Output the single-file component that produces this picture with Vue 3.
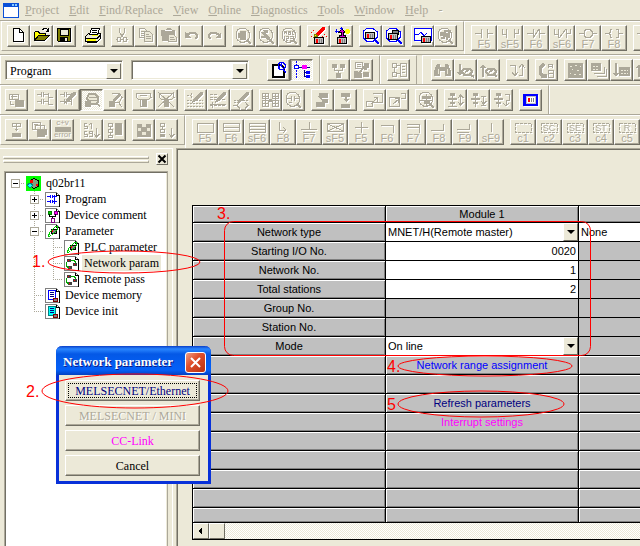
<script setup>
import { ref } from "vue"

const menus = ["Project", "Edit", "Find/Replace", "View", "Online", "Diagnostics", "Tools", "Window", "Help"]

// every part is [path, fill, stroke]; "c" is the current text colour
const lens = ["M14 14l4 4", "none", "c", 2]
const ring = ["M7 2.500h5l3 2 1.500 3v4l-2 3-3 1.500h-4l-3-2-1.500-3v-4l1.500-3z", "none", "c"]
const plc = (x, y) => [
    [`M${x} ${y}h9v6h-9z`, "#c0c0c0", "#000"],
    [`M${x + 1} ${y + 1}h2v4h-2z`, "#f00", "none"],
    [`M${x + 5} ${y + 1}v4M${x + 7} ${y + 1}v4`, "none", "#808080"],
]
const ladder = ["M2 4.500h4m2 0h5M6.500 2v5M8.500 2v5M13.500 3v12M2 11.500h4m2 0h5M6.500 9v5M8.500 9v5", "none", "c"]
const pen = ["M8 9l7-7h3v2l-7 7-4 2z", "c", "none"]

const icons = {
    new: [["M5.500 2.500h6l4 4v9h-10z", "#fff", "#000"], ["M11.500 2.500v4h4", "none", "#000"]],
    open: [
        ["M3.500 14.500v-8l1-1h3l1 2h6v3h-6z", "#ff0", "#000"],
        ["M7.500 9.500h11l-5 5h-10z", "#808000", "#000"],
        ["M11.500 4.500l1-2h3l2 3M17.500 2v3.500h-3", "none", "#000"],
    ],
    save: [
        ["M3.500 2.500h13v13h-12l-1-1z", "#808000", "#000"],
        ["M6 3h8v6h-8z", "#ece9d8", "#000"],
        ["M6 11h8v5h-8z", "#000", "none"],
        ["M11 12h2v3h-2z", "#ece9d8", "none"],
    ],
    print: [
        ["M2.500 10.500l3-3h12v5l-3 3h-12z", "#ece9d8", "#000"],
        ["M6.500 8.500l2-6h8l-2 6z", "#fff", "#000"],
        ["M9 4.500h5M8.500 6.500h5M3 12.500h11l3-3", "none", "#000"],
        ["M4 13h9v2h-9zM9 9h6v1h-6z", "#ff0", "none"],
        ["M4 16.500h10", "none", "#000"],
    ],
    cut: [
        ["M7.500 2v4l3 5M12.500 2v4l-3 5", "none", "c"],
        ["M6 11.500h2l1 2-1 2h-2l-1-2zM12 11.500h2l1 2-1 2h-2l-1-2z", "none", "c"],
    ],
    copy: [
        ["M4.500 2.500h5l2 2v7h-7zM6 5.500h3M6 7.500h3M6 9.500h3", "none", "c"],
        ["M9.500 5.500h5l3 3v7h-8zM11 8.500h3M11 10.500h5M11 12.500h5", "#ece9d8", "c"],
    ],
    paste: [
        ["M3 4h4l2-2h3l2 2h3v11h-13z", "c", "none"],
        ["M10.500 8.500h5l3 3v4h-8zM12 11.500h4M12 13.500h5", "#ece9d8", "c"],
        ["M7 4.500h7", "none", "#fff"],
    ],
    undo: [["M4 6v6h6z", "c", "none"], ["M6 9l3-2h5l2 2v2l-2 2", "none", "c", 2]],
    redo: [["M17 6v6h-6z", "c", "none"], ["M15 9l-3-2h-5l-2 2v2l2 2", "none", "c", 2]],
    findBlock: [ring, lens, ["M7 5h6v9h-6zM5 7h3v5h-3z", "c", "none"]],
    findPen: [ring, lens, ["M5 6h3l6 6v2h-3l-2-2h-4v-2h3z", "c", "none"], ["M7 4h5v3h-3z", "c", "none"]],
    findText: [
        ring, lens,
        ["M5.500 8v-3h2v3m0-1.500h-2M9.500 5v3.500h2v-3.500zm0 1.500h2M15 5.500h-2v3h2M5.500 10v4M7 10.500h2v1.500h-2v2h2M11 10.500h3v3.500h-3m0-2h3", "none", "c"],
    ],
    write: [
        ["M7 8l7-7h3v2l-7 7z", "#f00", "none"],
        ["M6 11l1-3 3 2z", "#ff0", "#808000"],
        ["M3 6h1M5 4h1M16 8h1M18 10h1M14 10h1M3 10h1", "none", "#f00"],
        ...plc(6.5, 11.5),
    ],
    read: [
        ["M8 9h2v-3h-2l3-3 3 3h-2v3h2v2h-6z", "#c0c", "#000"],
        ["M3.500 5h4M5.500 3v4M10.500 1v3M9 2.500h3", "none", "#00f"],
        ["M15 3h3v1h1v3h-1v1h-3v-1h-1v-3h1z", "#ff0", "none"],
        ...plc(6.5, 11.5),
    ],
    monitor: [["M7 2.500h6l4 3v6l-4 4h-6l-4-4v-6z", "#fff", "#00f"], ["M15 14l4 4", "none", "#00f", 2], ...plc(5.5, 6.5)],
    monitorAll: [
        ["M7 2.500h6l4 3v6l-4 4h-6l-4-4v-6z", "#fff", "#00f"], ["M15 14l4 4", "none", "#00f", 2],
        ["M9.500 4.500h6v4h-6z", "#808080", "#000"], ...plc(5.5, 7.5),
    ],
    trace: [["M2.500 2.500h17v12h-17zM2 8.500h4l3-2 3 3 3-2", "#fff", "#00f"], ...plc(9.5, 10.5)],
    findGlobe: [ring, lens, ["M5 7h5v2h-5M8.500 4.500h5v3h-3M6 12h3v-2h5M11.500 8v6M14 9v3", "none", "c", 2]],
    docFind: [
        ["M4.500 4.500h8l3 3v9h-11z", "#fff", "#000", 2],
        ["M12 2.500h3l2 2v3l-2 2h-3l-2-2v-3zM15 9l3 4", "none", "#00f"],
        ["M11 3l4 5M14 3l-3 5", "none", "#00f"],
    ],
    tree: [
        ["M5.500 1v17", "none", "#00f", 1, "2 1"],
        ["M3.500 5.500h4v3h-4z", "#fff", "#00f"],
        ["M8 7.500h3M16 7.500h3M13.500 10v6h2M13 12.500h2", "none", "#000080"],
        ["M11 5h5v4h-5z", "#f0f", "none"],
        ["M15 11h4v3h-4zM15 15h4v3h-4z", "#00f", "none"],
    ],
    hub: [["M4 4h5v4h-5zM12 4h5v4h-5zM8 13h5v5h-5z", "c", "none"], ["M6.500 7v3h8v-3M10.500 10v4", "none", "c"]],
    docSwap: [
        ["M4.500 2.500h7v6h-7zM6 4.500h4M6 6.500h4", "none", "c"],
        ["M13 3h5v5h-2v2h-3zM3 11h4v2h4v5h-8zM12 12h6v5h-6z", "c", "none"],
        ["M8 13l6-7", "none", "c", 2],
    ],
    ladderDoc: [["M4 3.500h4v4h-4zM4 12.500h4v4h-4zM6.500 8v4M9 5.500h3v8h-3M12.500 3.500h6v13h-6zM14 6.500h3M14 9.500h3M14 12.500h3", "none", "c"]],
    binoculars: [["M5 4h3v3h5v-3h3l3 7v5h-6v-5h-5v5h-6v-5z", "c", "none"], ["M6.500 9v5M15.500 9v5", "none", "#ece9d8"]],
    downFind: [["M4 4h2v8h2l-3 4-3-4h2z", "c", "none"], ["M9 8.500h6l2 3-2 3h-6l-2-3zM10 12l4-2M16 15l3 2", "none", "c", 2]],
    upFind: [["M4 17h2v-9h2l-3-4-3 4h2z", "c", "none"], ["M10 8.500h6l2 3-2 3h-6l-2-3zM11 12l4-2M17 15l2 2", "none", "c", 2]],
    jump: [["M3 5.500h5v9M5 12l3 4 3-4M12 15.500h3v-10M12 8l3-4 3 4", "none", "c"]],
    replace: [
        ["M8 4l-4 4v5l4 4", "none", "c", 3], ["M7 14h4v4h-6z", "c", "none"],
        ["M12.500 8v-4h4v4m0-2h-4M12.500 10v7h5v-7zM12 13.500h5", "none", "c"],
    ],
    grid: [["M3 3h15v15h-15z", "c", "none"], ["M5 6h2M10 5h2M15 6h1M7 9h1M12 10h2M5 13h1M9 14h2M14 14h2", "none", "#ece9d8", 1]],
    layers: [["M3 3h10v8h-10z", "c", "none"], ["M5 6h6M5 9h6", "none", "#ece9d8", 1, "2 1"], ["M6 13.500h10v-7M9 16.500h9v-8", "none", "c", 1]],
    downGrid: [["M4 3h2v10h2l-3 4-3-4h2zM8 7h11v9h-11z", "c", "none"], ["M10 10h7M10 13h7", "none", "#ece9d8", 1, "2 1"]],
    windows: [["M3.500 4.500h9v5h-9zM5 6.500h6M6.500 4v5", "none", "c"], ["M9 10h9v7h-9z", "c", "none"], ["M4 11v3l4 1", "none", "c"]],
    rungs: [ladder, ["M14 7.500h4M14 14.500h4", "none", "c"]],
    rungsPen: [ladder, pen],
    hand: [["M6 8l2-4h6l3 3v5l-2 2h-7z", "#ece9d8", "c", 2], ["M8 7.500h8M8 10.500h8M16 13l3 4", "none", "c"], ["M4 11h6v6h-6z", "c", "none"]],
    penFind: [["M8 3.500h7l3 4-3 5h-5M14 12l4 5", "none", "c"], ["M5 11h6v6h-6zM8 10l7-7 2 2-7 7z", "c", "none"]],
    plug: [["M3 3.500h14l1 4-3 2h-9l-3-2zM7 5.500h7M7.500 10v6h6v-6", "none", "c"], ["M9 10h5v7h-5z", "c", "none"]],
    plugOff: [["M3 3.500h14l1 4-3 2h-9l-3-2z", "none", "c"], ["M8 10h5v7h-5z", "c", "none"], ["M2 2l16 15M18 2l-16 15", "none", "c"]],
    hatchPen: [["M2 5.500h4M6.500 3v5M2 10.500h16M2 13.500h16M2 16.500h16", "none", "c", 1, "2 1"], pen],
    linePen: [["M2 4.500h7M2 7.500h7M2 9.500h16M2 15.500h16M4.500 12v6", "none", "c", 1, "3 1"], ["M2 14.500h16", "none", "c"], pen],
    codePen: [["M3 10.500h14M3 12.500h6", "none", "c", 1, "2 1"], ["M2 15.500h3M9 12l-3 3.500 3 3M14 12l3 3.500-3 3", "none", "c"], pen],
    tables: [["M2.500 3.500h6v5h-6zM2.500 10.500h6v6h-6zM12.500 3.500h6v5h-6zM12.500 10.500h6v6h-6zM5.500 3v13M15.500 3v13M2 6.500h6M12 6.500h6M2 13.500h6M12 13.500h6", "none", "c"], ["M9 9h3v3h-3z", "c", "none"]],
    findPlug: [ring, lens, ["M4 8.500h4M12 8.500h4M8.500 6v5M11.500 6v5M6 12.500h3", "none", "c"]],
    blockLink: [["M7 3h9v5h-9zM5 6h5v3h6v4h-6v-3zM4 12h9v5h-9z", "c", "none"]],
    blockDown: [["M6 3h9v4h-9zM6 14h9v4h-9zM10 7h2v2h2l-3 3-3-3h2z", "c", "none"]],
    expand: [["M2.500 11.500h6v5h-6zM8.500 3.500h10v9h-10M7 14l6-6M10 7.500h3.500v4", "none", "c"]],
    shrink: [["M2.500 7.500h10v9h-10zM13.500 3.500h5v5h-5M6 14l6-5M8 8.500h3.500v4", "none", "c"]],
    plugCircle: [ring, lens, ["M6 6h9v3h-9zM8 11h6v3h-6z", "c", "none"], ["M10.500 4v12M3 10.500h14", "none", "c"]],
    stepArrow: [["M5 3h5v3h-5zM3 8h9v2h-9zM5 12h5v2h-5zM3 16h9v1h-9z", "c", "none"], ["M7.500 3v14M15.500 5v10M13 12l2.500 3 3-3M13 8l2.500-3 3 3", "none", "c"]],
    stepEnd: [["M5 3h5v3h-5zM3 8h9v2h-9zM5 12h5v2h-5z", "c", "none"], ["M7.500 3v14M15.500 6v8M13 6.500h5M13 11l2.500 3 3-3M13 15.500h5", "none", "c"]],
    stepLoop: [["M5 3h5v3h-5zM3 8h9v2h-9zM5 12h5v2h-5z", "c", "none"], ["M7.500 3v14M14 4.500h4v6h-3v4M12 13l3 3 3-3", "none", "c"]],
    screen: [["M3 4h15v12h-15z", "#00f", "none"], ["M6 6.500h9v7h-9z", "#fff", "#c0c0c0"], ["M8 8h2v4h-2z", "#f00", "none"], ["M11.500 8v4M13.500 8v4", "none", "#808080"]],
    blockStep: [["M6 3.500h8v3h-8zM10.500 3v3", "none", "c"], ["M10 7h1v2h2l-3 2-2-2h2zM6 13h9v4h-9z", "c", "none"]],
    blocks: [["M3.500 2.500h8v7h-8zM6.500 5.500h9v4h-9zM5 4.500h4", "none", "c"], ["M8 9h10v6h-2v2h-8z", "c", "none"]],
    sort: [["M6 3.500h-3v2.500h3v2.500h-3.500M8 4.500l2-1v5.500M6 11.500h-3v2.500h3v2.500h-3.500M11 13.500h-2.500v-2h2.500v5h-3M15.500 8v9M13 14l2.500 3 3-3", "none", "c"]],
    stepBox: [["M4.500 3.500h4v3h-4zM4.500 9.500h4v3h-4zM4.500 15.500h4v2h-4zM6.500 7v2M6.500 13v2", "none", "c"], ["M11 3h7v12h-7z", "c", "none"]],
    check: [["M4 4h14v13h-14z", "c", "none"], ["M9 5.500h4M5 9.500h3M14 9.500h3M9 13.500h4", "none", "#ece9d8", 3]],
    stepDown: [["M4.500 3.500h4v3h-4zM4.500 9.500h4v3h-4zM6.500 7v2M15.500 8v9M13 14l2.500 3 3-3", "none", "c"], ["M4 14h5v3h-5z", "c", "none"]],
}

const fkeys = {
    open: "M3 7.500h6m6 0h6M9.500 3v9M15.500 3v9",
    orOpen: "M4.500 3v5h4M8.500 3v9M16.500 3v9M16 7.500h4M20.500 3v5",
    close: "M3 7.500h6m6 0h6M9.500 3v9M15.500 3v9M9 12l6-9",
    orClose: "M4.500 3v5h4M8.500 3v9M16.500 3v9M16 7.500h4M20.500 3v5M9 12l7-9",
    coil: "M3 7.500h5m8 0h5M10 3.500h4l2 2v4l-2 2h-4l-2-2v-4z",
    func: "M3 7.500h4m10 0h4M10 3.500h-2v3l-1 1 1 1v3h2M14 3.500h2v3l1 1-1 1v3h-2",
    box: "M4.500 3.500h16v9h-16z",
    box2: "M4.500 3.500h16v8h-16zM4 7.500h16",
    box3: "M4.500 3.500h16v9h-16zM4 6.500h16M4 9.500h16",
    jump: "M8.500 2v8h6M12 7l3 3-3 3",
    end: "M12.500 2v8M4 9.500h16M6 12.500h12",
    cross: "M4.500 3.500h16v8h-16zM5 4l15 7M5 11l15-7",
    plus: "M12.500 2v11M6 7.500h13",
    corner: "M6 5.500h12v7",
    corner2: "M6 4.500h12v8M6 7.500h12",
    low: "M4 10.500h12v-7",
    low2: "M4 9.500h12v-6M4 12.500h12",
    bar: "M12.500 3v9",
    dash: "M4.500 3.500h16v9h-16z",
}
const f = (label, glyph, tag) => ({ label, glyph, tag })

const toolbars = [
    [
        { short: true, groups: [["new", "open", "save"], ["print"], ["cut", "copy", "paste", "undo", "redo"], ["findBlock", "findPen", "findText"], ["write", "read"], ["monitor", "monitorAll"], ["trace", "findGlobe"]] },
        { groups: [[f("F5", "open"), f("sF5", "orOpen"), f("F6", "close"), f("sF6", "orClose"), f("F7", "coil"), f("F8", "func")], [f("", "open")]] },
    ],
    [
        { combos: true, groups: [["docFind", "tree"]] },
        { groups: [["hub", "docSwap"]] },
        { groups: [["ladderDoc"]] },
        { apart: true, groups: [["binoculars", "downFind", "upFind"], ["jump"], ["replace"], ["grid", "layers", "downGrid", "upFind"]] },
    ],
    [
        { groups: [["windows"], ["rungs", "rungsPen", "hand", "penFind"], ["plug", "plugOff"], ["hatchPen", "linePen", "codePen"], ["tables", "findPlug"], ["blockLink", "blockDown"], ["expand", "shrink"], ["plugCircle"], ["stepArrow", "stepEnd", "stepLoop"], ["screen"]] },
        { groups: [] },
    ],
    [
        { short: true, groups: [["blockStep", "blocks", f("error", "", "c+v")], ["sort", "stepBox"], ["check", "stepDown"]] },
        {
            groups: [
                [f("F5", "box"), f("F6", "box2"), f("sF6", "box3"), f("F8", "jump"), f("F7", "end"), f("sF5", "cross"), f("F5", "plus"), f("F6", "corner"), f("F7", "corner2"), f("F8", "low"), f("F9", "low2"), f("sF9", "bar")],
                [f("c1", "dash"), f("c2", "dash", "SC"), f("c3", "dash", "SE"), f("c4", "dash", "ST"), f("c5", "dash", "R")],
            ],
        },
    ],
]
const pressed = ["tree", "hand"]
const paint = (value) => (value === "c" ? "currentColor" : value)

const page = [["M.5.500h11l3 3v11h-14z", "#fff", "#808080"], ["M14.500 3v12h-14M11.500.500v3h3", "none", "#000"]]
const gear = [["M3 3h4v3h-4zM9 7h4v3h-4zM4 10h4v3h-4z", "#404040", "none"], ["M7 4.500h3l2 2M2.500 6v4l2 2", "none", "#0a0"], ["M4 4h1M10 8h1M5 11h1", "none", "#f00"]]
const param = [["M6 5h5v4h-5z", "#808080", "#000"], ["M7 6h1v2h-1z", "#f00", "none"], ["M3.500 12.500l1-4 6-6h2v3l-6 6z", "none", "#0c0"]]
const treeIcons = {
    root: [["M0 0h15v15h-15z", "#0f0", "none"], ["M4 4.500l4-2 4 2v6l-4 2-3-2", "#80a080", "#000"], ["M4 4h3v3h-3zM10 8h2v2h-2z", "#f00", "none"], ["M1 9l3-2 3 2-3 3z", "#0ff", "#008080"]],
    program: [...page, ["M2 4.500h3m2 0h5M5.500 3v3M7.500 3v3M2 9.500h3m2 0h5M5.500 8v3M7.500 8v3M9.500 3v9", "none", "#00f"]],
    comment: [...page, ["M3 3h3v3h-3z", "#0c0", "#008000"], ["M9 3h3v3h-3z", "#f0f", "#800080"], ["M4.500 6v2h6v-2M7.500 8v2", "none", "#000"], ["M6 10h3v4h-3z", "#fff", "#800080"]],
    param: [...page, ...param],
    net: [...page, ...gear],
    memory: [...page, ["M3.500 2.500h7v9h-7z", "#fff", "#00f"], ["M5 4.500h4M5 6.500h4M5 8.500h4", "none", "#000080"], ["M8 10h4v3h-4z", "#808080", "#800000"]],
    init: [...page, ["M3.500 2.500h7v9h-7z", "#0ff", "#008080"], ["M5 4.500h4M5 6.500h4M5 8.500h4", "none", "#000080"], ["M8 10h4v3h-4z", "#808080", "#800000"]],
}
const nodes = [
    { text: "q02br11", icon: "root", cells: ["minus"] },
    { text: "Program", icon: "program", cells: ["", "tee plus"] },
    { text: "Device comment", icon: "comment", cells: ["", "tee plus"] },
    { text: "Parameter", icon: "param", cells: ["", "tee minus"] },
    { text: "PLC parameter", icon: "param", cells: ["", "line", "tee"] },
    { text: "Network param", icon: "net", cells: ["", "line", "tee"] },
    { text: "Remote pass", icon: "net", cells: ["", "line", "end"] },
    { text: "Device memory", icon: "memory", cells: ["", "tee"] },
    { text: "Device init", icon: "init", cells: ["", "end"] },
]
const selected = ref("Network param")

const networkType = ref("MNET/H(Remote master)")
const networkType2 = ref("None")
const mode = ref("On line")
const fields = ref([
    { label: "Starting I/O No.", value: "0020" },
    { label: "Network No.", value: "1" },
    { label: "Total stations", value: "2" },
])
const actions = [
    { text: "Network range assignment", tone: "blue" },
    { text: "" },
    { text: "Refresh parameters", tone: "navy" },
    { text: "Interrupt settings", tone: "pink" },
    { text: "" }, { text: "" }, { text: "" }, { text: "" }, { text: "" },
]

const showDialog = ref(true)
const closeDialog = () => showDialog.value = false
</script>

<template>
    <div class="app">
        <nav class="menu">
            <svg class="logo" width="16" height="15" shape-rendering="crispEdges">
                <path d="M0 0h16v15h-16z" fill="#0a50d8" />
                <path d="M1 4h14v10h-14z" fill="#fff" />
                <path d="M9 1h2v2h-2zM12 1h2v2h-2z" fill="#8cf" />
            </svg>
            <button v-for="item in menus" :key="item"><u>{{ item[0] }}</u>{{ item.slice(1) }}</button>
            <span>-</span>
        </nav>

        <div v-for="(bar, b) in toolbars" :key="b" class="bar" :class="'bar' + b">
            <div v-for="(band, n) in bar" :key="n" class="band" :class="{ short: band.short, apart: band.apart }">
                <div v-if="band.combos" class="combos">
                    <label class="combo">
                        <select aria-label="Data type"><option>Program</option></select>
                        <span class="arrow"></span>
                    </label>
                    <label class="combo">
                        <select aria-label="Data name"><option></option></select>
                        <span class="arrow"></span>
                    </label>
                </div>
                <div v-for="(group, g) in band.groups" :key="g" class="group">
                    <template v-for="(tool, t) in group" :key="t">
                        <button v-if="tool.label === 'error'" class="tool text-tool" aria-label="Error">
                            <span>c+v</span><i></i><span>error</span>
                        </button>
                        <button v-else-if="tool.glyph" class="fkey">
                            <svg width="24" height="14" shape-rendering="crispEdges">
                                <path :d="fkeys[tool.glyph]" fill="none" stroke="currentColor" :stroke-dasharray="tool.glyph === 'dash' ? '3 1' : null" />
                                <text v-if="tool.tag" x="12" y="11" text-anchor="middle">{{ tool.tag }}</text>
                            </svg>
                            <span>{{ tool.label }}</span>
                        </button>
                        <button v-else class="tool" :class="{ pressed: pressed.includes(tool) }" :aria-label="tool">
                            <svg width="21" height="20" shape-rendering="crispEdges">
                                <path v-for="(p, i) in icons[tool]" :key="i" :d="p[0]" :fill="paint(p[1])" :stroke="paint(p[2])" :stroke-width="p[3]" :stroke-dasharray="p[4]" />
                            </svg>
                        </button>
                    </template>
                </div>
            </div>
        </div>

        <main>
            <aside>
                <div class="grip">
                    <div><i></i><i></i></div>
                    <button aria-label="Close pane">
                        <svg width="10" height="10"><path d="M1.500 1.500l7 7M8.500 1.500l-7 7" stroke="#000" stroke-width="2" /></svg>
                    </button>
                </div>
                <ul class="tree">
                    <li v-for="node in nodes" :key="node.text">
                        <span v-for="(cell, c) in node.cells" :key="c" class="cell" :class="cell">
                            <button v-if="/plus|minus/.test(cell)" :aria-label="'Toggle ' + node.text"></button>
                        </span>
                        <svg width="15" height="15" shape-rendering="crispEdges">
                            <path v-for="(p, i) in treeIcons[node.icon]" :key="i" :d="p[0]" :fill="p[1]" :stroke="p[2]" />
                        </svg>
                        <button class="node" :class="{ selected: selected === node.text }" @click="selected = node.text">{{ node.text }}</button>
                    </li>
                </ul>
            </aside>

            <section class="client">
                <table>
                    <thead>
                        <tr><th></th><th>Module 1</th><th></th></tr>
                    </thead>
                    <tbody>
                        <tr>
                            <th>Network type</th>
                            <td>
                                <label class="pick">
                                    <select v-model="networkType" aria-label="Network type"><option>MNET/H(Remote master)</option></select>
                                    <span class="arrow"></span>
                                </label>
                            </td>
                            <td>
                                <label class="pick">
                                    <select v-model="networkType2" aria-label="Network type 2"><option>None</option></select>
                                    <span class="arrow"></span>
                                </label>
                            </td>
                        </tr>
                        <tr v-for="field in fields" :key="field.label">
                            <th>{{ field.label }}</th>
                            <td><input v-model="field.value" :aria-label="field.label" /></td>
                            <td class="off"></td>
                        </tr>
                        <tr v-for="label in ['Group No.', 'Station No.']" :key="label">
                            <th>{{ label }}</th>
                            <td class="off"></td>
                            <td class="off"></td>
                        </tr>
                        <tr>
                            <th>Mode</th>
                            <td>
                                <label class="pick">
                                    <select v-model="mode" aria-label="Mode"><option>On line</option></select>
                                    <span class="arrow"></span>
                                </label>
                            </td>
                            <td class="off"></td>
                        </tr>
                        <tr v-for="(action, i) in actions" :key="i" class="action">
                            <th></th>
                            <td class="raised"><button v-if="action.text" :class="action.tone">{{ action.text }}</button></td>
                            <td class="raised"></td>
                        </tr>
                    </tbody>
                </table>
                <div class="scroll">
                    <button aria-label="Scroll left">
                        <svg width="14" height="14" shape-rendering="crispEdges"><path d="M8 3v8l-4-4z" /></svg>
                    </button>
                    <i></i>
                </div>
            </section>
        </main>

        <div v-if="showDialog" class="dialog" role="dialog" aria-label="Network parameter">
            <header>
                <h1>Network parameter</h1>
                <button aria-label="Close" @click="closeDialog">
                    <svg width="19" height="19"><path d="M5 5l9 9M14 5l-9 9" stroke="#fff" stroke-width="2" /></svg>
                </button>
            </header>
            <div class="choices">
                <button class="navy focused">MELSECNET/Ethernet</button>
                <button disabled>MELSECNET / MINI</button>
                <button class="pink">CC-Link</button>
                <button @click="closeDialog">Cancel</button>
            </div>
        </div>

        <!-- red numbered marks over the window -->
        <svg class="marks" width="640" height="546">
            <ellipse cx="124" cy="262" rx="76" ry="11" />
            <ellipse cx="135" cy="391" rx="93" ry="17" />
            <rect x="224.500" y="221.500" width="366" height="134" rx="9" />
            <ellipse cx="485" cy="366" rx="87" ry="10" />
            <ellipse cx="481" cy="404" rx="83" ry="13" />
            <text x="32" y="267">1.</text>
            <text x="26" y="397">2.</text>
            <text x="217" y="219">3.</text>
            <text x="387" y="372">4.</text>
            <text x="387" y="410">5</text>
        </svg>
    </div>
</template>

<style>
body {
    margin: 0;
    background: #ece9d8;
}
</style>

<style scoped>
.app {
    position: relative;
    display: flex;
    flex-direction: column;
    min-height: 100vh;
    overflow: hidden;
    background: #ece9d8;
    font: 12px/16px "Liberation Serif", serif;
    color: #000;
}

* {
    box-sizing: border-box;
}

svg {
    display: block;
    flex: none;
}

button,
select,
input {
    margin: 0;
    padding: 0;
    border: 0;
    border-radius: 0;
    background: none;
    font: inherit;
    color: inherit;
    outline: 0;
    appearance: none;
}

.menu {
    display: flex;
    align-items: center;
    gap: 10px;
    height: 20px;
    padding-left: 3px;
    color: #aca899;
    text-shadow: 1px 1px #fff;
}

.logo {
    margin-right: -4px;
}

.bar {
    display: flex;
    align-items: stretch;
    height: 30px;
    border-top: 1px solid #aca899;
}

.bar0 {
    height: 34px;
    padding-left: 1px;
}

.bar3 {
    height: 34px;
}

.band {
    display: flex;
    align-items: flex-start;
    flex: none;
    gap: 6px;
    padding: 3px 6px 0;
    border: 1px solid #fff;
    border-right-color: #aca899;
    border-bottom: 0;
}

.band:first-child {
    padding-left: 4px;
}

.bar0 .band:first-child {
    padding-left: 5px;
}

.band:last-child {
    flex: 1 0 auto;
    border-right: 0;
}

.short {
    height: 30px;
    border-bottom: 1px solid #aca899;
}

.apart {
    margin-left: 5px;
    padding-left: 8px;
}

.group {
    display: flex;
}

.tool,
.fkey {
    border: 1px solid #fff;
    border-right-color: #716f64;
    border-bottom-color: #716f64;
    box-shadow: inset -1px -1px #aca899;
    color: #aca899;
    text-shadow: 1px 1px #fff;
}

.tool {
    width: 23px;
    height: 22px;
}

.tool path,
.fkey path {
    stroke-linecap: butt;
}

.tool svg,
.fkey svg {
    filter: drop-shadow(1px 1px 0 #fff);
}

.pressed {
    border-color: #716f64 #fff #fff #716f64;
    box-shadow: inset 1px 1px #aca899;
    background: repeating-conic-gradient(#fff 0 25%, #ece9d8 0 50%) 0 0 / 2px 2px;
}

.text-tool {
    display: flex;
    flex-direction: column;
    align-items: center;
    font: 8px/6px "Liberation Sans", sans-serif;
}

.text-tool i {
    width: 16px;
    height: 5px;
    margin-top: 1px;
    background: #aca899;
}

.fkey {
    display: flex;
    flex-direction: column;
    align-items: center;
    width: 26px;
    height: 26px;
    font: 11px/8px "Liberation Sans", sans-serif;
}

.fkey text {
    font: 9px "Liberation Sans", sans-serif;
    fill: currentColor;
}

.combos {
    display: flex;
    gap: 8px;
    margin-right: 12px;
    padding-top: 1px;
}

.combo,
.pick {
    display: grid;
    align-items: stretch;
    background: #fff;
}

.combo {
    width: 118px;
    height: 20px;
    border: 1px solid #aca899;
    border-right-color: #fff;
    border-bottom-color: #fff;
    box-shadow: inset 1px 1px #716f64, inset -1px -1px #ece9d8;
    padding: 2px 1px 1px 2px;
}

.combo select,
.pick select,
.arrow {
    grid-area: 1 / 1;
}

.combo select {
    padding-left: 2px;
}

.arrow {
    justify-self: end;
    display: grid;
    place-items: center;
    width: 15px;
    border: 1px solid #fff;
    border-right-color: #716f64;
    border-bottom-color: #716f64;
    background: #ece9d8;
    pointer-events: none;
}

.arrow::after {
    content: "";
    border: 4px solid transparent;
    border-top-color: #000;
    border-bottom: 0;
}

main {
    display: flex;
    flex: 1;
}

aside {
    display: flex;
    flex-direction: column;
    flex: none;
    width: 173px;
    margin-right: 3px;
    padding: 4px 4px 0;
    border: 1px solid #fff;
    border-left: 0;
    border-bottom: 0;
}

.grip {
    display: flex;
    align-items: center;
    gap: 7px;
    height: 12px;
    margin-bottom: 6px;
}

.grip div {
    display: grid;
    gap: 1px;
    flex: 1;
    margin-left: -1px;
}

.grip i {
    height: 3px;
    border: 1px solid #fff;
    border-right-color: #aca899;
    border-bottom-color: #aca899;
}

.grip button {
    border: 1px solid #fff;
    border-right-color: #716f64;
    border-bottom-color: #716f64;
}

.tree {
    flex: 1;
    margin: 0;
    padding: 3px 1px;
    list-style: none;
    background: #fff;
    border: 1px solid #aca899;
    border-bottom: 0;
    box-shadow: inset 1px 1px #716f64, inset -1px 0 #ece9d8;
}

.tree li {
    display: flex;
    align-items: center;
    height: 16px;
}

.tree li svg {
    margin-left: 1px;
}

.cell {
    display: grid;
    place-items: center;
    width: 19px;
    height: 16px;
    background-repeat: no-repeat;
    background-image: repeating-linear-gradient(#aca899 0 1px, transparent 1px 2px), repeating-linear-gradient(90deg, #aca899 0 1px, transparent 1px 2px);
    background-position: 9px 0, 9px 8px;
    background-size: 0 0, 0 0;
}

.line {
    background-size: 1px 16px, 0 0;
}

.tee {
    background-size: 1px 16px, 10px 1px;
}

.end {
    background-size: 1px 8px, 10px 1px;
}

.minus {
    background-size: 0 0, 10px 1px;
}

.tee.minus {
    background-size: 1px 16px, 10px 1px;
}

.cell button {
    width: 9px;
    height: 9px;
    border: 1px solid #aca899;
    background: linear-gradient(#000, #000) center / 5px 1px no-repeat, #fff;
}

.plus button {
    background: linear-gradient(#000, #000) center / 5px 1px no-repeat, linear-gradient(#000, #000) center / 1px 5px no-repeat, #fff;
}

.node {
    margin-left: 3px;
    padding: 0 2px;
    white-space: nowrap;
}

.selected {
    background: #ece9d8;
}

.client {
    flex: 1;
    min-width: 0;
    overflow: hidden;
    padding: 56px 0 6px 15px;
    border: 1px solid #aca899;
    border-right: 0;
    border-bottom: 0;
    box-shadow: inset 1px 1px #716f64;
    font: 11px/16px "Liberation Sans", sans-serif;
}

table {
    table-layout: fixed;
    width: 580px;
    border-spacing: 1px;
    background: #000;
}

th,
td {
    height: 18px;
    padding: 0;
    background: #fff;
    font-weight: normal;
    text-align: center;
}

thead th {
    height: 16px;
}

th,
.raised {
    background: #c0c0c0;
    box-shadow: inset 1px 1px #fff, inset -1px -1px #808080;
}

.off {
    background: #c0c0c0;
}

.action:last-child > * {
    height: 14px;
}

td input {
    display: block;
    width: 100%;
    height: 18px;
    padding-right: 2px;
    text-align: right;
}

.pick {
    height: 18px;
}

.pick select {
    padding-left: 2px;
}

td button {
    display: block;
    width: 100%;
    height: 18px;
}

.blue {
    color: #00f;
}

.navy {
    color: #000080;
}

.pink {
    color: #f0f;
}

.scroll {
    display: flex;
    height: 17px;
    border-bottom: 1px solid #000;
    border-left: 1px solid #000;
    background: repeating-conic-gradient(#fff 0 25%, #ece9d8 0 50%) 0 0 / 2px 2px;
}

.scroll button,
.scroll i {
    width: 16px;
    border: 1px solid #fff;
    border-right-color: #716f64;
    border-bottom-color: #716f64;
    background: #ece9d8;
}

.dialog {
    position: absolute;
    left: 56px;
    top: 346px;
    width: 155px;
    border: 3px solid #0831d9;
    border-top: 0;
    border-radius: 6px 6px 0 0;
    background: #ece9d8;
}

.dialog header {
    display: flex;
    align-items: center;
    justify-content: space-between;
    height: 29px;
    margin: 0 -3px;
    padding: 3px 5px 0 7px;
    border-radius: 6px 6px 0 0;
    background: linear-gradient(#0a3fc8, #2a86ff 3px, #0458e6 8px, #0460f8 24px, #0340c0);
}

.dialog h1 {
    margin: 0;
    font-size: 13px;
    line-height: 16px;
    color: #fff;
    text-shadow: 1px 1px #0a1883;
    white-space: nowrap;
}

.dialog header button {
    border: 1px solid #fff;
    border-radius: 3px;
    background: linear-gradient(135deg, #f0a088, #e0502c 40%, #b83010);
}

.choices {
    display: grid;
    gap: 4px;
    padding: 5px 8px 5px 6px;
}

.choices button {
    height: 21px;
    border: 1px solid #fff;
    border-right-color: #716f64;
    border-bottom-color: #716f64;
    box-shadow: inset -1px -1px #aca899;
}

.choices button:disabled {
    color: #aca899;
    text-shadow: 1px 1px #fff;
}

.choices .focused {
    outline: 1px dotted #000;
    outline-offset: -4px;
}

.marks {
    position: absolute;
    left: 0;
    top: 0;
    fill: none;
    stroke: #f00;
    pointer-events: none;
}

.marks text {
    font: 16px "Liberation Sans", sans-serif;
    fill: #f00;
    stroke: none;
}
</style>
